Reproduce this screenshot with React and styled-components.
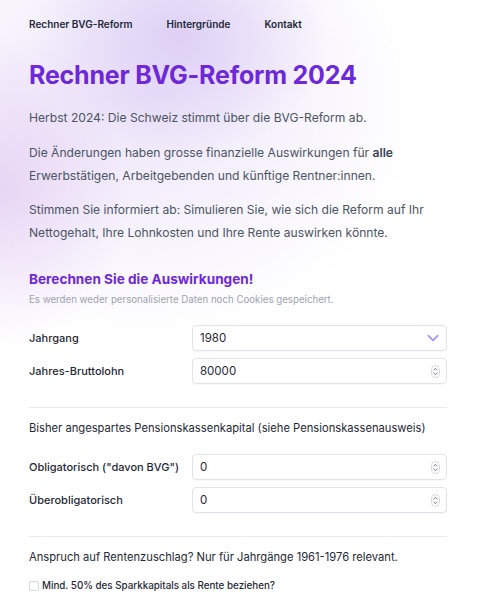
import { useState } from "react";
import styled, { createGlobalStyle } from "styled-components";

const GlobalStyle = createGlobalStyle`
  html, body {
    margin: 0;
    padding: 0;
    background: #ffffff;
  }
  body {
    font-family: Inter, "Noto Sans", "Liberation Sans", sans-serif;
    color: #1f2937;
    -webkit-font-smoothing: antialiased;
  }
  * {
    box-sizing: border-box;
  }
`;

const years = Array.from({ length: 60 }, (_, i) => 1950 + i);

const Spinner = () => (
  <SpinIcon width="9" height="13" viewBox="0 0 9 13">
    <rect x="0.5" y="0.5" width="8" height="12" rx="4" fill="#fff" stroke="#d6d7dd" />
    <path d="M2.8 5L4.5 3.3 6.2 5M2.8 8L4.5 9.7 6.2 8" fill="none" stroke="#6b7280" strokeWidth="1" strokeLinecap="round" strokeLinejoin="round" />
  </SpinIcon>
);

const NumberField = ({ id, value, onChange }) => (
  <FieldWrap>
    <Input id={id} type="number" value={value} onChange={(e) => onChange(e.target.value)} />
    <Spinner />
  </FieldWrap>
);

const App = () => {
  const [year, setYear] = useState("1980");
  const [salary, setSalary] = useState("80000");
  const [mandatory, setMandatory] = useState("0");
  const [extra, setExtra] = useState("0");
  const [pension, setPension] = useState(false);

  return (
    <Page>
      <GlobalStyle />
      <Main>
        <Nav>
          <NavLink href="#">Rechner BVG-Reform</NavLink>
          <NavLink href="#">Hintergründe</NavLink>
          <NavLink href="#">Kontakt</NavLink>
        </Nav>

        <Title>Rechner BVG-Reform 2024</Title>
        <Intro>Herbst 2024: Die Schweiz stimmt über die BVG-Reform ab.</Intro>
        <Intro>
          Die Änderungen haben grosse finanzielle Auswirkungen für <b>alle</b>
          <br />
          Erwerbstätigen, Arbeitgebenden und künftige Rentner:innen.
        </Intro>
        <Intro>
          Stimmen Sie informiert ab: Simulieren Sie, wie sich die Reform auf Ihr
          <br />
          Nettogehalt, Ihre Lohnkosten und Ihre Rente auswirken könnte.
        </Intro>

        <Subtitle>Berechnen Sie die Auswirkungen!</Subtitle>
        <Note>Es werden weder personalisierte Daten noch Cookies gespeichert.</Note>

        <Form>
          <Fields>
            <Row>
              <Label htmlFor="jahrgang">Jahrgang</Label>
              <FieldWrap>
                <Select id="jahrgang" value={year} onChange={(e) => setYear(e.target.value)}>
                  {years.map((y) => (
                    <option key={y} value={y}>{y}</option>
                  ))}
                </Select>
                <Chevron width="14" height="14" viewBox="0 0 24 24">
                  <path d="M4 8l8 8 8-8" fill="none" stroke="#a78bfa" strokeWidth="2.8" strokeLinecap="round" strokeLinejoin="round" />
                </Chevron>
              </FieldWrap>
            </Row>
            <Row>
              <Label htmlFor="lohn">Jahres-Bruttolohn</Label>
              <NumberField id="lohn" value={salary} onChange={setSalary} />
            </Row>
          </Fields>

          <Divider />

          <SectionText>Bisher angespartes Pensionskassenkapital (siehe Pensionskassenausweis)</SectionText>

          <Fields>
            <Row>
              <Label htmlFor="obl">Obligatorisch ("davon BVG")</Label>
              <NumberField id="obl" value={mandatory} onChange={setMandatory} />
            </Row>
            <Row>
              <Label htmlFor="ueber">Überobligatorisch</Label>
              <NumberField id="ueber" value={extra} onChange={setExtra} />
            </Row>
          </Fields>

          <Divider />

          <SectionText>Anspruch auf Rentenzuschlag? Nur für Jahrgänge 1961-1976 relevant.</SectionText>

          <CheckRow>
            <Checkbox type="checkbox" checked={pension} onChange={() => setPension((p) => !p)} />
            Mind. 50% des Sparkkapitals als Rente beziehen?
          </CheckRow>
        </Form>
      </Main>
    </Page>
  );
};

export default App;

const Page = styled.div`
  min-height: 600px;
  background:
    radial-gradient(ellipse 150px 120px at 180px 35px, rgba(205, 185, 240, 0.55), rgba(205, 185, 240, 0) 100%),
    radial-gradient(ellipse 130px 160px at 0px 190px, rgba(218, 188, 238, 0.55), rgba(218, 188, 238, 0) 100%),
    radial-gradient(ellipse 280px 240px at 140px 100px, rgba(225, 212, 246, 0.6), rgba(225, 212, 246, 0) 100%),
    #ffffff;
`;

const Main = styled.main`
  width: 480px;
  padding: 17px 0 20px 29px;
`;

const Form = styled.div`
  width: 418px;
`;

const Nav = styled.nav`
  display: flex;
  gap: 34px;
`;

const NavLink = styled.a`
  font-size: 10px;
  line-height: 14px;
  font-weight: 600;
  color: #1f2937;
  text-decoration: none;
`;

const Title = styled.h1`
  margin: 29px 0 16px;
  font-size: 25px;
  line-height: 30px;
  font-weight: 700;
  color: #6d28d9;
  letter-spacing: -0.2px;
`;

const Intro = styled.p`
  margin: 0 0 11.5px;
  font-size: 12.1px;
  line-height: 23px;
  color: #4b5563;

  b {
    font-weight: 600;
    color: #374151;
  }
`;

const Subtitle = styled.h2`
  margin: 25px 0 4px;
  font-size: 13.6px;
  line-height: 20px;
  font-weight: 700;
  color: #6d28d9;
`;

const Note = styled.p`
  margin: 0 0 18px;
  font-size: 9.7px;
  line-height: 14px;
  color: #9ca3af;
`;

const Fields = styled.div`
  display: flex;
  flex-direction: column;
  gap: 7px;
`;

const Row = styled.div`
  display: grid;
  grid-template-columns: 163px 1fr;
  align-items: center;
`;

const Label = styled.label`
  font-size: 11px;
  font-weight: 500;
  color: #1f2937;
`;

const fieldStyle = `
  width: 100%;
  height: 26px;
  padding: 0 7px;
  border: 1px solid #e2e3ea;
  border-radius: 4px;
  background: #ffffff;
  font-family: Inter, "Noto Sans", "Liberation Sans", sans-serif;
  font-size: 11.5px;
  color: #1f2937;
  outline: none;
  box-shadow: 0 1px 1px rgba(17, 24, 39, 0.03);
`;

const FieldWrap = styled.div`
  position: relative;
`;

const Input = styled.input`
  ${fieldStyle}
  display: block;
  -moz-appearance: textfield;
  &::-webkit-inner-spin-button,
  &::-webkit-outer-spin-button {
    -webkit-appearance: none;
    margin: 0;
  }
`;

const Select = styled.select`
  ${fieldStyle}
  appearance: none;
  -webkit-appearance: none;
  display: block;
`;

const Chevron = styled.svg`
  position: absolute;
  right: 7px;
  top: 6px;
  pointer-events: none;
`;

const SpinIcon = styled.svg`
  position: absolute;
  right: 7px;
  top: 6.5px;
  pointer-events: none;
`;

const Divider = styled.hr`
  margin: 23px 0 0;
  border: none;
  border-top: 1px solid #e8e8ee;
`;

const SectionText = styled.p`
  margin: 12px 0 18px;
  font-size: 11.2px;
  line-height: 16px;
  color: #1f2937;
`;

const CheckRow = styled.label`
  display: flex;
  align-items: center;
  gap: 2px;
  margin-top: -4px;
  font-size: 9.8px;
  line-height: 14px;
  font-weight: 500;
  color: #1f2937;
`;

const Checkbox = styled.input`
  appearance: none;
  -webkit-appearance: none;
  width: 10px;
  height: 10px;
  margin: 0 1px 0 0;
  border: 1px solid #d8d9df;
  border-radius: 2px;
  background: #fff;
`;
